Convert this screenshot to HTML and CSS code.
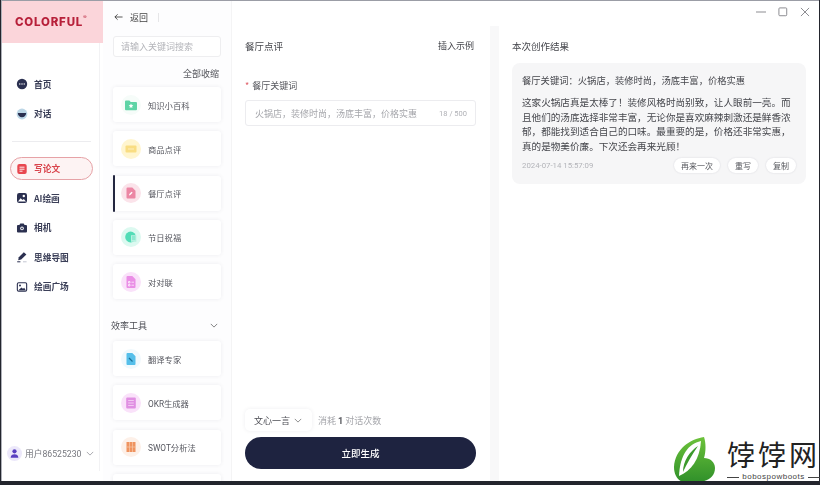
FILE: index.html
```html
<!DOCTYPE html>
<html lang="zh-CN">
<head>
<meta charset="utf-8">
<title>COLORFUL</title>
<link rel="stylesheet" href="styles.css">
</head>
<body>
<div class="window">
  <div class="app">
    <aside class="sidebar">
      <div class="logo"><span class="logo-text">COLORFUL</span><span class="logo-mark">®</span></div>
      <nav class="nav">
        <div class="nav-group">
          <a class="nav-item"><svg class="nav-icon" viewBox="0 0 12 12"><circle cx="6" cy="6" r="5.2" fill="#2b3050"/><circle cx="3.8" cy="6" r=".7" fill="#fff"/><circle cx="6" cy="6" r=".7" fill="#fff"/><circle cx="8.2" cy="6" r=".7" fill="#fff"/></svg>首页</a>
          <a class="nav-item"><svg class="nav-icon" viewBox="0 0 12 12"><circle cx="6" cy="6" r="5.4" fill="#bcd6e6"/><path d="M1.8 5h8.4a4.2 4.2 0 0 1-8.4 0z" fill="#2b3050"/></svg>对话</a>
        </div>
        <div class="nav-divider"></div>
        <div class="nav-group">
          <a class="nav-item nav-item-active"><svg class="nav-icon" viewBox="0 0 12 12"><rect x="1.3" y="1" width="9.4" height="10" rx="2" fill="#e8474f"/><path d="M3.5 4.2h5M3.5 6.2h5M3.5 8.2h3" stroke="#fff" stroke-width=".9"/></svg>写论文</a>
          <a class="nav-item"><svg class="nav-icon" viewBox="0 0 12 12"><rect x="1" y="1" width="10" height="10" rx="2.2" fill="#2b3050"/><circle cx="7.8" cy="4" r="1.2" fill="#fff"/><path d="M2 9.4l2.6-3.2 2 1.8 1.2-.9L10 9.4z" fill="#fff"/></svg>AI绘画</a>
          <a class="nav-item"><svg class="nav-icon" viewBox="0 0 12 12"><path d="M4.3 1.6h3.4l.9 1.4h1.4a1 1 0 0 1 1 1v5.4a1 1 0 0 1-1 1H1.99a1 1 0 0 1-1-1V4a1 1 0 0 1 1-1h1.4z" fill="#2b3050"/><circle cx="6" cy="6.4" r="1.8" fill="#fff"/><circle cx="6" cy="6.4" r=".9" fill="#2b3050"/></svg>相机</a>
          <a class="nav-item"><svg class="nav-icon" viewBox="0 0 12 12"><path d="M7.8 1.2l2.6 2.4-5.2 5-3 .7.6-3z" fill="#2b3050"/><path d="M1.2 10.8h3.2" stroke="#2b3050" stroke-width="1"/><path d="M7 10.8h3.6" stroke="#c4c6d2" stroke-width="1"/></svg>思维导图</a>
          <a class="nav-item"><svg class="nav-icon" viewBox="0 0 12 12"><rect x=".8" y="1.2" width="10.4" height="9.6" rx="1.8" fill="#2b3050"/><rect x="1.9" y="2.3" width="8.2" height="7.4" rx=".8" fill="#fff"/><circle cx="4" cy="4.4" r="1" fill="#2b3050"/><path d="M2.2 9.4l3.2-3 1.6 1.3 1.2-1 1.7 2.7z" fill="#2b3050"/></svg>绘画广场</a>
        </div>
      </nav>
      <div class="user">
        <span class="avatar"><svg viewBox="0 0 12 12"><circle cx="6" cy="3.6" r="2.3" fill="#5a3fc0"/><path d="M1.8 10.6c0-2.6 1.9-3.8 4.2-3.8s4.2 1.2 4.2 3.8z" fill="#5a3fc0"/></svg></span>
        <span class="user-name">用户86525230</span>
        <svg class="chev" viewBox="0 0 10 6"><path d="M1 1l4 4 4-4" fill="none" stroke="#8a8a92" stroke-width=".9"/></svg>
      </div>
    </aside>

    <main class="main">
      <header class="topbar">
        <div class="back">
          <svg class="back-arrow" viewBox="0 0 10 8"><path d="M9.5 4H1M4 1L1 4l3 3" fill="none" stroke="#333" stroke-width=".9"/></svg>
          <span>返回</span><i class="back-sep"></i>
        </div>
        <div class="win-controls">
          <svg viewBox="0 0 11 11"><path d="M0 5.5h11" stroke="#8d8d92" stroke-width="1.1"/></svg>
          <svg viewBox="0 0 11 11"><rect x="1" y="1" width="8.6" height="8.6" rx="1" fill="none" stroke="#8d8d92" stroke-width="1.1"/></svg>
          <svg viewBox="0 0 11 11"><path d="M1 1l9 9M10 1l-9 9" stroke="#8d8d92" stroke-width="1.1"/></svg>
        </div>
      </header>

      <div class="panels">
        <section class="catalog">
          <div class="search">请输入关键词搜索</div>
          <div class="collapse-all">全部收缩</div>
          <div class="tool-list">
            <div class="tool"><span class="halo halo-green"><svg viewBox="0 0 12 12"><path d="M0 2.4a1 1 0 0 1 1-1h3.4l1.3 1.5H11a1 1 0 0 1 1 1v6.4a1 1 0 0 1-1 1H1a1 1 0 0 1-1-1z" fill="#5fd4a6"/><path d="M6 4.600l.7 1.500 1.600.2-1.200 1.100.3 1.600L6 8.200l-1.400.8.3-1.600-1.200-1.100 1.600-.2z" fill="#fff"/></svg></span>知识小百科</div>
            <div class="tool"><span class="halo halo-yellow"><svg viewBox="0 0 12 12"><rect x=".5" y="2.500" width="11" height="7" rx="1" fill="#f9dd82"/><path d="M3 6h6" stroke="#fdeebc" stroke-width="1"/></svg></span>商品点评</div>
            <div class="tool tool-active"><span class="halo halo-pink"><svg viewBox="0 0 12 12"><path d="M1.500 1.500a1 1 0 0 1 1-1h4.800l3.200 3.200v6.800a1 1 0 0 1-1 1h-7a1 1 0 0 1-1-1z" fill="#ec86a4"/><path d="M4 8.400l.3-1.400 2.300-2.200 1 1-2.300 2.300z" fill="#fff"/></svg></span>餐厅点评</div>
            <div class="tool"><span class="halo halo-mint"><svg viewBox="0 0 12 12"><circle cx="5.600" cy="6" r="5.400" fill="#52dcb6"/><path d="M6 4.200h5.400v6.600H6z" fill="#b6f1e0"/><path d="M7 6h3.400M7 8h3.400" stroke="#52dcb6" stroke-width=".8"/></svg></span>节日祝福</div>
            <div class="tool"><span class="halo halo-violet"><svg viewBox="0 0 12 12"><path d="M1.500 1a1 1 0 0 1 1-1h4.800l3.200 3.200v7.800a1 1 0 0 1-1 1h-7a1 1 0 0 1-1-1z" fill="#ea8ee6"/><path d="M3.500 5.500h1.500v1.500H3.500zM3.500 8.500h1.500v1.500H3.500zM6.500 6.200h2.500M6.500 9.200h2.500" stroke="#fff" stroke-width=".7" fill="none"/></svg></span>对对联</div>
          </div>
          <div class="section-head"><span>效率工具</span><svg class="chev" viewBox="0 0 10 6"><path d="M1 1l4 4 4-4" fill="none" stroke="#555" stroke-width=".9"/></svg></div>
          <div class="tool-list">
            <div class="tool"><span class="halo halo-sky"><svg viewBox="0 0 12 12"><path d="M1.500 .9a.9.9 0 0 1 .9-.9h4.900l3.200 3.200v7.900a.9.9 0 0 1-.9.9H2.400a.9.9 0 0 1-.9-.9z" fill="#55bfea"/><path d="M4 5l3.500 3.500" stroke="#1a6f98" stroke-width="1.200"/></svg></span>翻译专家</div>
            <div class="tool"><span class="halo halo-violet"><svg viewBox="0 0 12 12"><rect x="1.200" y=".5" width="9.600" height="11" rx="1" fill="#e08fe2"/><path d="M3.200 3.500h5.600M3.200 6h5.600M3.200 8.500h5.600" stroke="#f6d9f6" stroke-width=".8"/></svg></span>OKR生成器</div>
            <div class="tool"><span class="halo halo-orange"><svg viewBox="0 0 12 12"><path d="M1.500 1h9v10h-9z" fill="#ef935f"/><path d="M4.500 1v10M7.500 1v10M1.500 6h9" stroke="#f8c9ab" stroke-width=".7"/></svg></span>SWOT分析法</div>
            <div class="tool"></div>
          </div>
        </section>

        <section class="editor">
          <div class="panel-head"><span>餐厅点评</span><span>插入示例</span></div>
          <label class="field-label"><span class="req">*</span>餐厅关键词</label>
          <div class="field"><span>火锅店，装修时尚，汤底丰富，价格实惠</span><span class="count">18 / 500</span></div>
          <div class="editor-foot">
            <div class="model-row">
              <div class="model">文心一言<svg class="chev" viewBox="0 0 10 6"><path d="M1 1l4 4 4-4" fill="none" stroke="#666" stroke-width=".9"/></svg></div>
              <div class="cost">消耗 <b>1</b> 对话次数</div>
            </div>
            <div class="generate">立即生成</div>
          </div>
        </section>

        <section class="result">
          <h2 class="result-title">本次创作结果</h2>
          <article class="result-card">
            <p class="result-query">餐厅关键词：火锅店，装修时尚，汤底丰富，价格实惠</p>
            <p class="result-body">这家火锅店真是太棒了！装修风格时尚别致，让人眼前一亮。而且他们的汤底选择非常丰富，无论你是喜欢麻辣刺激还是鲜香浓郁，都能找到适合自己的口味。最重要的是，价格还非常实惠，真的是物美价廉。下次还会再来光顾！</p>
            <div class="result-foot">
              <time>2024-07-14 15:57:09</time>
              <div class="actions"><span>再来一次</span><span>重写</span><span>复制</span></div>
            </div>
          </article>
        </section>
      </div>
    </main>
  </div>
  <div class="watermark">
    <svg class="wm-logo" viewBox="10 8 50 52">
      <defs><linearGradient id="wmg" x1="0" y1="0" x2="0" y2="1"><stop offset="0" stop-color="#6cc23a"/><stop offset="1" stop-color="#2f8f2a"/></linearGradient></defs>
      <path d="M44 12C30 14 15 24 14 42c0 10 6 16 14 16 12 0 27-2 27-15 0-6-5-10-11-10 2-7 2-15 0-21z" fill="url(#wmg)"/>
      <path d="M41 16C28 19 20 30 19 51c12-5 21-17 22-35z" fill="#fff"/>
      <path d="M38 21C30 26 23 36 23 47c4-9 9-17 15-26z" fill="#3c9a2c"/>
    </svg>
    <div class="wm-text">
      <div class="wm-name">饽饽网</div>
      <div class="wm-url">bobospowboots</div>
    </div>
  </div>
</div>
</body>
</html>
```

FILE: styles.css
```css
* { box-sizing: border-box; }
html, body { margin: 0; height: 100%; }
body {
  width: 820px;
  height: 485px;
  overflow: hidden;
  font-family: "Noto Sans CJK SC", "Liberation Sans", sans-serif;
  color: #333;
}
p, h2 { margin: 0; font-weight: 400; }

.window {
  position: relative;
  width: 820px;
  height: 485px;
  padding: 0 1px 4px 1px;
  background: #23252d;
  overflow: hidden;
}
.app {
  display: flex;
  height: 100%;
  background: #fff;
  border-left: 1px solid #aeb0b8;
  border-top: 1px solid #9b9da6;
  filter: blur(.3px);
}

/* sidebar */
.sidebar {
  width: 101px;
  flex: none;
  display: flex;
  flex-direction: column;
  background: #fff;
}
.logo {
  height: 42px;
  display: flex;
  align-items: center;
  padding-left: 13px;
  background: #fbd5da;
}
.logo-text {
  font: 800 11.5px Inter, sans-serif;
  letter-spacing: .8px;
  color: #b7203a;
}
.logo-mark {
  font: 400 5px Inter, sans-serif;
  color: #b7203a;
  margin-bottom: 11px;
}
.nav {
  flex: 1;
  padding-top: 29.5px;
  border-right: 1px solid #f2f2f4;
  margin-right: 3px;
}
.nav-group {
  display: flex;
  flex-direction: column;
  gap: 6.5px;
  padding: 0 6px 0 8px;
}
.nav-divider {
  height: 1px;
  margin: 16px 8px 15px 10px;
  background: #ececef;
}
.nav-item {
  display: flex;
  align-items: center;
  gap: 6px;
  height: 23px;
  padding-left: 6px;
  font-size: 8.7px;
  font-weight: 700;
  color: #3b3f58;
}
.nav-icon { width: 12px; height: 12px; flex: none; }
.nav-item-active {
  border: 1px solid #e6a2a6;
  border-radius: 12px;
  background: #fdf3f3;
  color: #d9444c;
  padding-left: 5px;
}
.user {
  display: flex;
  align-items: center;
  height: 36px;
  padding-left: 5px;
  margin: -10px 3px 10px 0;
  border-right: 1px solid #f2f2f4;
  font-size: 8.7px;
  color: #77787f;
}
.avatar {
  width: 15px;
  height: 15px;
  border-radius: 50%;
  background: #ece8fa;
  display: flex;
  align-items: center;
  justify-content: center;
}
.avatar svg { width: 11px; height: 11px; }
.user-name {
  margin-left: 3px;
  font-family: Roboto, "Noto Sans CJK SC", sans-serif;
  font-size: 8.7px;
}
.chev { width: 8px; height: 5px; flex: none; }
.user .chev { margin-left: 5px; }

/* main area */
.main {
  flex: 1;
  min-width: 0;
  display: flex;
  flex-direction: column;
}
.topbar {
  position: relative;
  z-index: 1;
  height: 25px;
  flex: none;
  display: flex;
  align-items: flex-start;
  justify-content: space-between;
  padding: 6px 9px 0 11px;
  font-size: 9px;
}
.back { display: flex; align-items: center; height: 20px; color: #444; }
.back-arrow { width: 9px; height: 8px; margin-right: 7px; }
.back-sep { width: 1px; height: 9px; margin-left: 10px; background: #e6e6e8; }
.win-controls { display: flex; gap: 12px; }
.win-controls svg { width: 10px; height: 10px; }

.panels {
  flex: 1;
  min-height: 0;
  display: flex;
  background: #f8f8f9;
}
.catalog {
  position: relative;
  width: 129px;
  flex: none;
  margin-top: -25px;
  padding: 35px 10px 0 10px;
  overflow: hidden;
  background: #fdfdfe;
  border-right: 1px solid #f4f4f5;
}
.search {
  height: 21px;
  line-height: 19px;
  padding-left: 7px;
  border: 1px solid #eeeef0;
  border-radius: 3px;
  background: #fff;
  font-size: 9px;
  color: #b4b5ba;
}
.collapse-all {
  margin: 10px 2px 0 0;
  height: 14px;
  line-height: 14px;
  text-align: right;
  font-size: 9px;
  color: #55565c;
}
.tool-list {
  display: flex;
  flex-direction: column;
  gap: 9.25px;
  margin-top: 6px;
}
.tool {
  position: relative;
  flex: none;
  height: 35px;
  display: flex;
  align-items: center;
  gap: 7px;
  padding-left: 8px;
  background: #fff;
  border-radius: 3px;
  box-shadow: 0 0 4px rgba(30, 30, 60, .07);
  font-size: 8.3px;
  font-family: Roboto, "Noto Sans CJK SC", sans-serif;
  color: #55565e;
}
.tool-active::before {
  content: "";
  position: absolute;
  left: 0;
  top: -1px;
  bottom: -1px;
  width: 2px;
  border-radius: 1px;
  background: #23263f;
}
.halo {
  width: 20px;
  height: 20px;
  border-radius: 50%;
  display: flex;
  align-items: center;
  justify-content: center;
  flex: none;
}
.halo svg { width: 12px; height: 12px; }
.halo-green { background: #f6fcf9; }
.halo-yellow { background: #fff5cf; }
.halo-pink { background: #fbe3ea; }
.halo-mint { background: #dcf9f0; }
.halo-violet { background: #fae2fa; }
.halo-sky { background: #f0f9fd; }
.halo-orange { background: #fdf0e8; }
.section-head {
  display: flex;
  align-items: center;
  justify-content: space-between;
  height: 16px;
  margin: 18px 3px 0 -2px;
  font-size: 9px;
  color: #4c4d54;
}
.section-head + .tool-list { margin-top: 8px; }

.editor {
  width: 258px;
  flex: none;
  display: flex;
  flex-direction: column;
  padding: 0 14px 12px 13px;
  background: #fff;
}
.panel-head {
  display: flex;
  justify-content: space-between;
  height: 40px;
  padding-top: 13px;
  line-height: 14px;
  font-size: 9.5px;
  color: #45464c;
}
.panel-head span:last-child { font-size: 9px; padding-right: 2px; }
.field-label {
  margin-top: 13px;
  height: 14px;
  line-height: 14px;
  font-size: 9px;
  color: #55565c;
}
.req { color: #e0606a; margin-right: 3px; }
.field {
  display: flex;
  align-items: center;
  justify-content: space-between;
  height: 26px;
  margin-top: 7px;
  padding: 0 8px 0 9px;
  border: 1px solid #ececef;
  border-radius: 3px;
  font-size: 9px;
  color: #a5a6ab;
}
.count { font-family: Roboto, sans-serif; font-size: 7.5px; color: #b0b1b6; }
.editor-foot { margin-top: auto; }
.model-row {
  display: flex;
  align-items: center;
  gap: 6px;
}
.model {
  display: flex;
  align-items: center;
  gap: 4px;
  width: 67px;
  height: 22px;
  padding-left: 9px;
  border-radius: 5px;
  background: #fff;
  box-shadow: 0 0 4px rgba(30, 30, 60, .07);
  font-size: 9px;
  color: #4c4d54;
}
.cost { font-size: 9px; color: #a5a6ab; }
.cost b { color: #55565c; font-weight: 700; font-family: Roboto, sans-serif; }
.generate {
  height: 32px;
  margin-top: 6px;
  line-height: 32px;
  text-align: center;
  border-radius: 16px;
  background: #1e2340;
  color: #fff;
  font-size: 9.5px;
  font-weight: 500;
}

.result {
  flex: 1;
  min-width: 0;
  margin-left: 9px;
  padding: 0 13px;
  background: #fff;
}
.result-title {
  height: 37px;
  padding-top: 13px;
  line-height: 14px;
  font-size: 9.5px;
  color: #45464c;
}
.result-card {
  width: 294px;
  height: 121px;
  padding: 10px 10px 0;
  border-radius: 8px;
  background: #f6f6f7;
  color: #45464c;
}
.result-query {
  font-size: 9.3px;
  line-height: 14px;
}
.result-body {
  margin-top: 8px;
  width: 272px;
  font-size: 9.6px;
  line-height: 14.7px;
}
.result-foot {
  display: flex;
  align-items: center;
  justify-content: space-between;
  margin-top: 4px;
}
.result-foot time {
  font-family: Roboto, sans-serif;
  font-size: 7.8px;
  color: #b3b4b9;
}
.actions { display: flex; gap: 8px; }
.actions span {
  height: 15px;
  line-height: 15px;
  padding: 0 7px;
  border-radius: 8px;
  background: #fff;
  box-shadow: 0 0 2px rgba(30, 30, 60, .15);
  font-size: 8px;
  color: #55565c;
}

/* watermark stamped over the screenshot */
.watermark {
  position: absolute;
  right: 0;
  bottom: 4px;
  width: 150px;
  height: 48px;
  display: flex;
  align-items: flex-start;
  gap: 7px;
  overflow: hidden;
}
.wm-logo { width: 50px; height: 52px; flex: none; }
.wm-text { flex: 1; min-width: 0; margin-top: 5px; }
.wm-name {
  height: 32px;
  font-size: 28px;
  line-height: 32px;
  letter-spacing: 3px;
  color: #222;
  white-space: nowrap;
}
.wm-url {
  display: flex;
  align-items: center;
  gap: 3px;
  margin-top: 3px;
  font: 8px/8px "Liberation Sans", sans-serif;
  letter-spacing: .5px;
  color: #444;
}
.wm-url::before,
.wm-url::after {
  content: "";
  flex: 1;
  height: 1px;
  background: #444;
}
```
